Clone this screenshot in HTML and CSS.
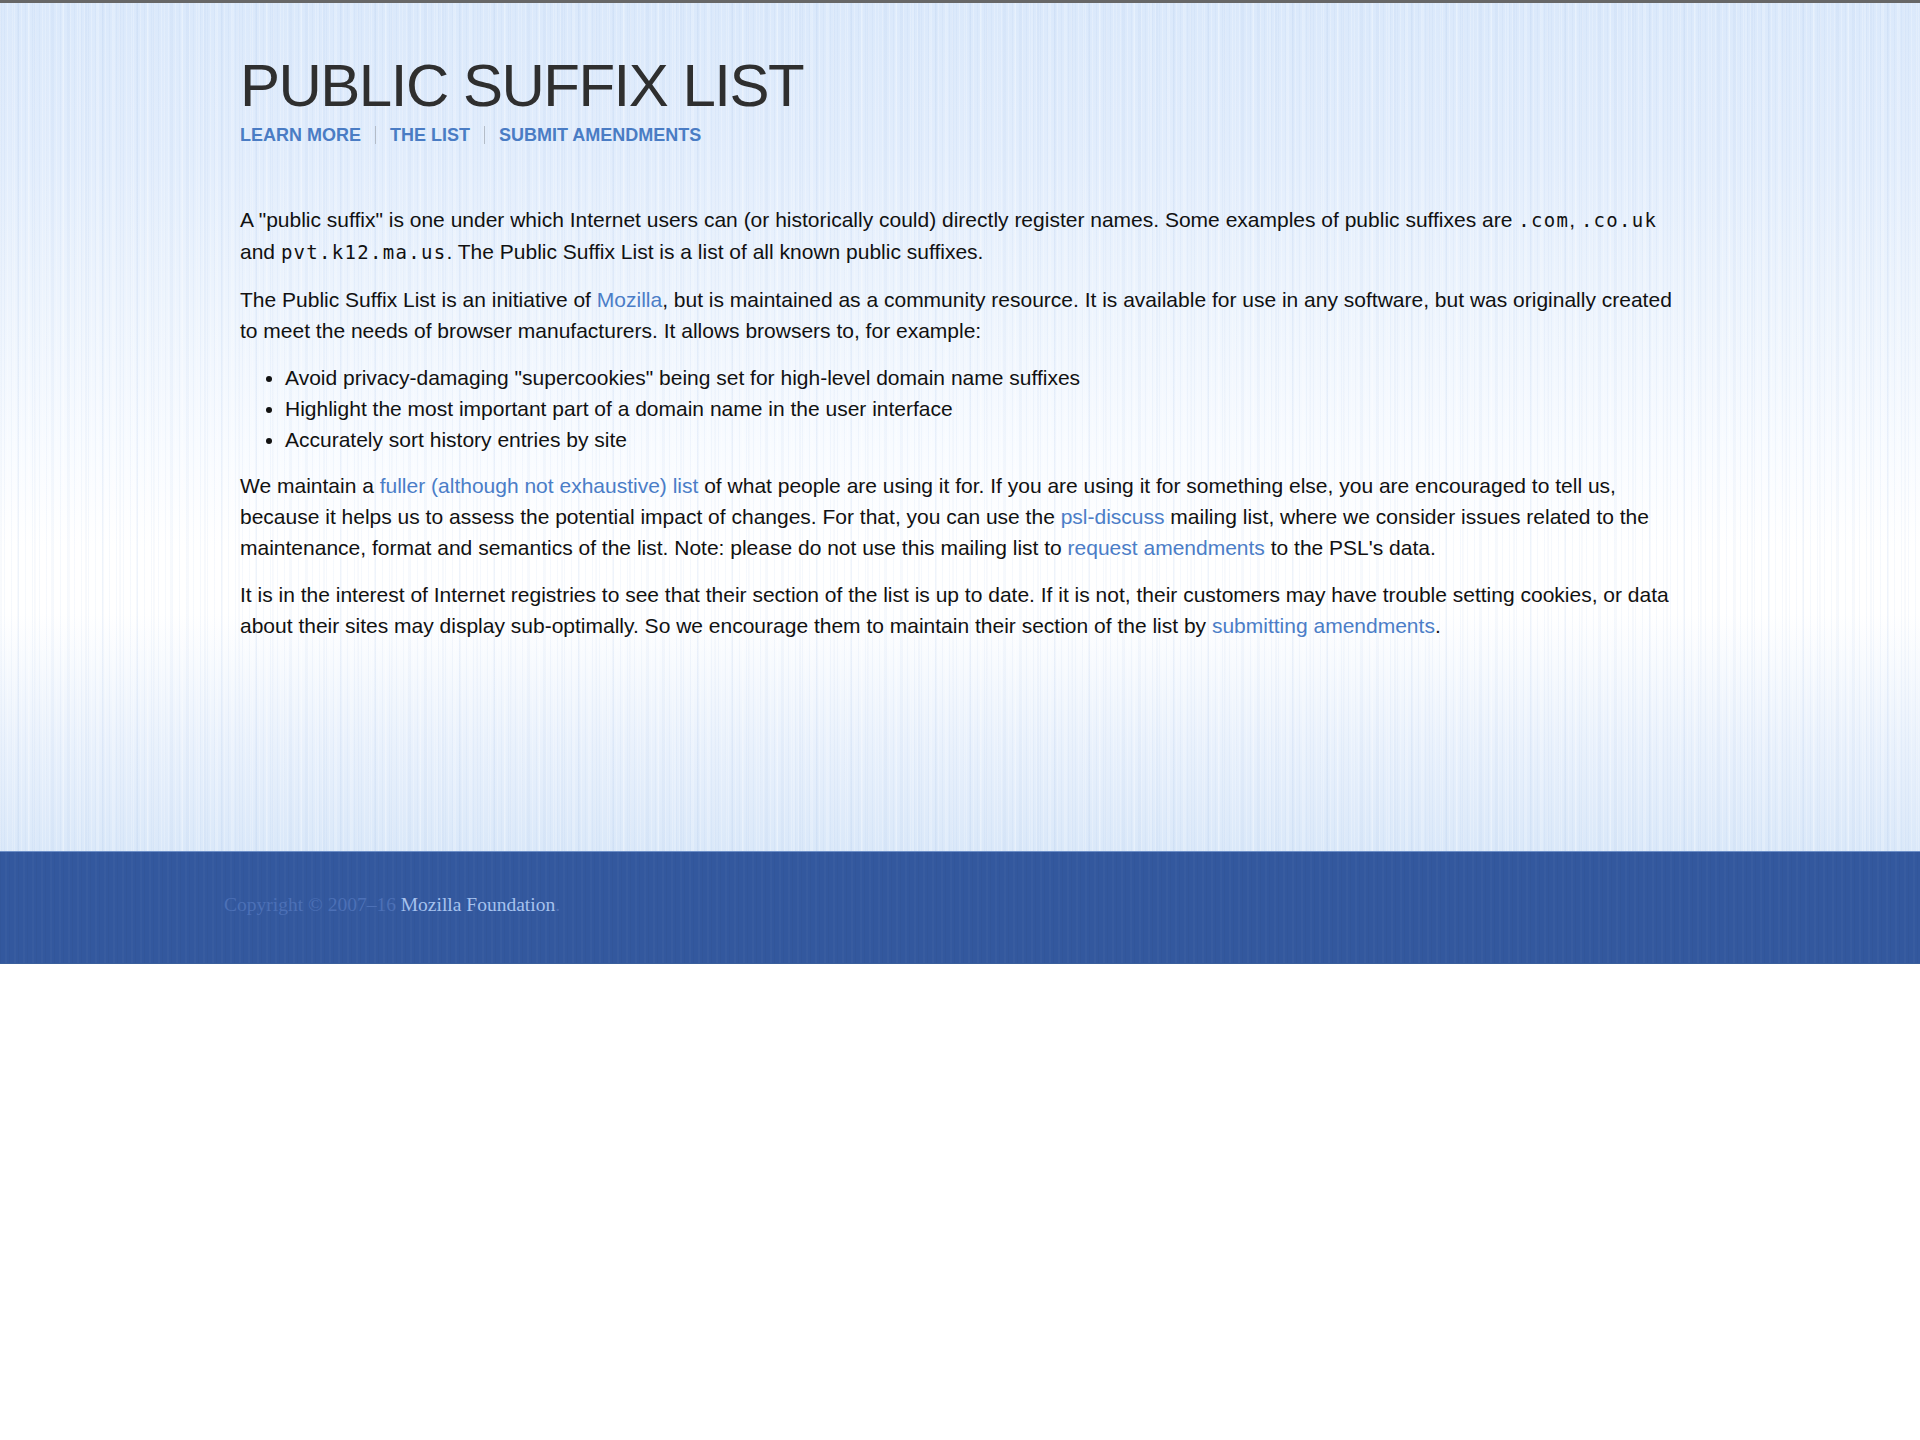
FILE: index.html
```html
<!DOCTYPE html>
<html lang="en">
<head>
<meta charset="utf-8">
<title>Public Suffix List</title>
<link rel="stylesheet" href="styles.css">
</head>
<body>
<div class="page">
  <header class="masthead">
    <div class="wrap">
      <h1 class="title">PUBLIC SUFFIX LIST</h1>
      <nav class="nav">
        <a href="#" class="nav-link">LEARN MORE</a>
        <span class="nav-sep"></span>
        <a href="#" class="nav-link">THE LIST</a>
        <span class="nav-sep"></span>
        <a href="#" class="nav-link">SUBMIT AMENDMENTS</a>
      </nav>
    </div>
  </header>
  <main class="wrap content">
    <p>A "public suffix" is one under which Internet users can (or historically could) directly register names. Some examples of public suffixes are <code>.com</code>, <code>.co.uk</code> and <code>pvt.k12.ma.us</code>. The Public Suffix List is a list of all known public suffixes.</p>
    <p>The Public Suffix List is an initiative of <a href="#">Mozilla</a>, but is maintained as a community resource. It is available for use in any software, but was originally created to meet the needs of browser manufacturers. It allows browsers to, for example:</p>
    <ul class="uses">
      <li>Avoid privacy-damaging "supercookies" being set for high-level domain name suffixes</li>
      <li>Highlight the most important part of a domain name in the user interface</li>
      <li>Accurately sort history entries by site</li>
    </ul>
    <p>We maintain a <a href="#">fuller (although not exhaustive) list</a> of what people are using it for. If you are using it for something else, you are encouraged to tell us, because it helps us to assess the potential impact of changes. For that, you can use the <a href="#">psl-discuss</a> mailing list, where we consider issues related to the maintenance, format and semantics of the list. Note: please do not use this mailing list to <a href="#">request amendments</a> to the PSL's data.</p>
    <p>It is in the interest of Internet registries to see that their section of the list is up to date. If it is not, their customers may have trouble setting cookies, or data about their sites may display sub-optimally. So we encourage them to maintain their section of the list by <a href="#">submitting amendments</a>.</p>
  </main>
</div>
<footer class="footer">
  <div class="footer-inner">Copyright &copy; 2007&ndash;16 <a href="#" class="footer-link">Mozilla Foundation</a>.</div>
</footer>
</body>
</html>
```

FILE: styles.css
```css
html, body {
  margin: 0;
  padding: 0;
  background: #ffffff;
}

body {
  font-family: "Liberation Sans", Arial, sans-serif;
  color: #111111;
}

.page {
  border-top: 3px solid #676767;
  height: 851px;
  box-sizing: border-box;
  background:
    repeating-linear-gradient(90deg, rgba(255,255,255,0.22) 0 1px, rgba(255,255,255,0) 1px 4px, rgba(160,190,230,0.10) 4px 5px, rgba(255,255,255,0) 5px 7px),
    repeating-linear-gradient(90deg, rgba(150,180,225,0.08) 0 2px, rgba(255,255,255,0) 2px 11px, rgba(255,255,255,0.18) 11px 13px, rgba(255,255,255,0) 13px 17px),
    linear-gradient(180deg, #dbe9fb 0%, #e2edfc 18%, #edf4fd 35%, #f8fbff 52%, #ffffff 64%, #ffffff 72%, #f7fafe 78%, #e9f1fc 88%, #dae8f9 100%);
}

.wrap {
  width: 1440px;
  margin: 0 auto;
}

.masthead {
  padding-top: 53px;
}

.title {
  margin: 0;
  font-size: 60px;
  line-height: 60px;
  font-weight: normal;
  color: #2f2f2f;
  letter-spacing: -1.5px;
}

.nav {
  display: flex;
  align-items: center;
  margin-top: 8px;
  height: 22px;
}

.nav-link {
  font-size: 18px;
  line-height: 22px;
  font-weight: bold;
  color: #4a7cc4;
  text-decoration: none;
}

.nav-sep {
  width: 1px;
  height: 18px;
  background: #b3bcc8;
  margin: 0 14px;
}

.content {
  padding-top: 58px;
  font-size: 21px;
  line-height: 31px;
}

.content p {
  margin: 0 0 16px 0;
}

.content a {
  color: #4b7dc7;
  text-decoration: none;
}

.content code {
  font-family: "DejaVu Sans Mono", "Liberation Mono", monospace;
  font-size: 19px;
  letter-spacing: 1.3px;
}

.uses {
  margin: 15px 0 15px 0;
  padding-left: 45px;
}

.footer {
  height: 113px;
  box-sizing: border-box;
  border-top: 1px solid #6d8fc8;
  background:
    repeating-linear-gradient(90deg, rgba(0,0,0,0.025) 0 1px, rgba(0,0,0,0) 1px 5px, rgba(255,255,255,0.025) 5px 7px, rgba(0,0,0,0) 7px 9px),
    #33589e;
  border-bottom: 1px solid #3a5f9c;
}

.footer-inner {
  width: 1472px;
  margin: 0 auto;
  padding-top: 41px;
  font-family: "Liberation Serif", "DejaVu Serif", serif;
  font-size: 19.5px;
  line-height: 24px;
  color: #4c70b6;
}

.footer-link {
  color: #a6c2ee;
  text-decoration: none;
}
```
